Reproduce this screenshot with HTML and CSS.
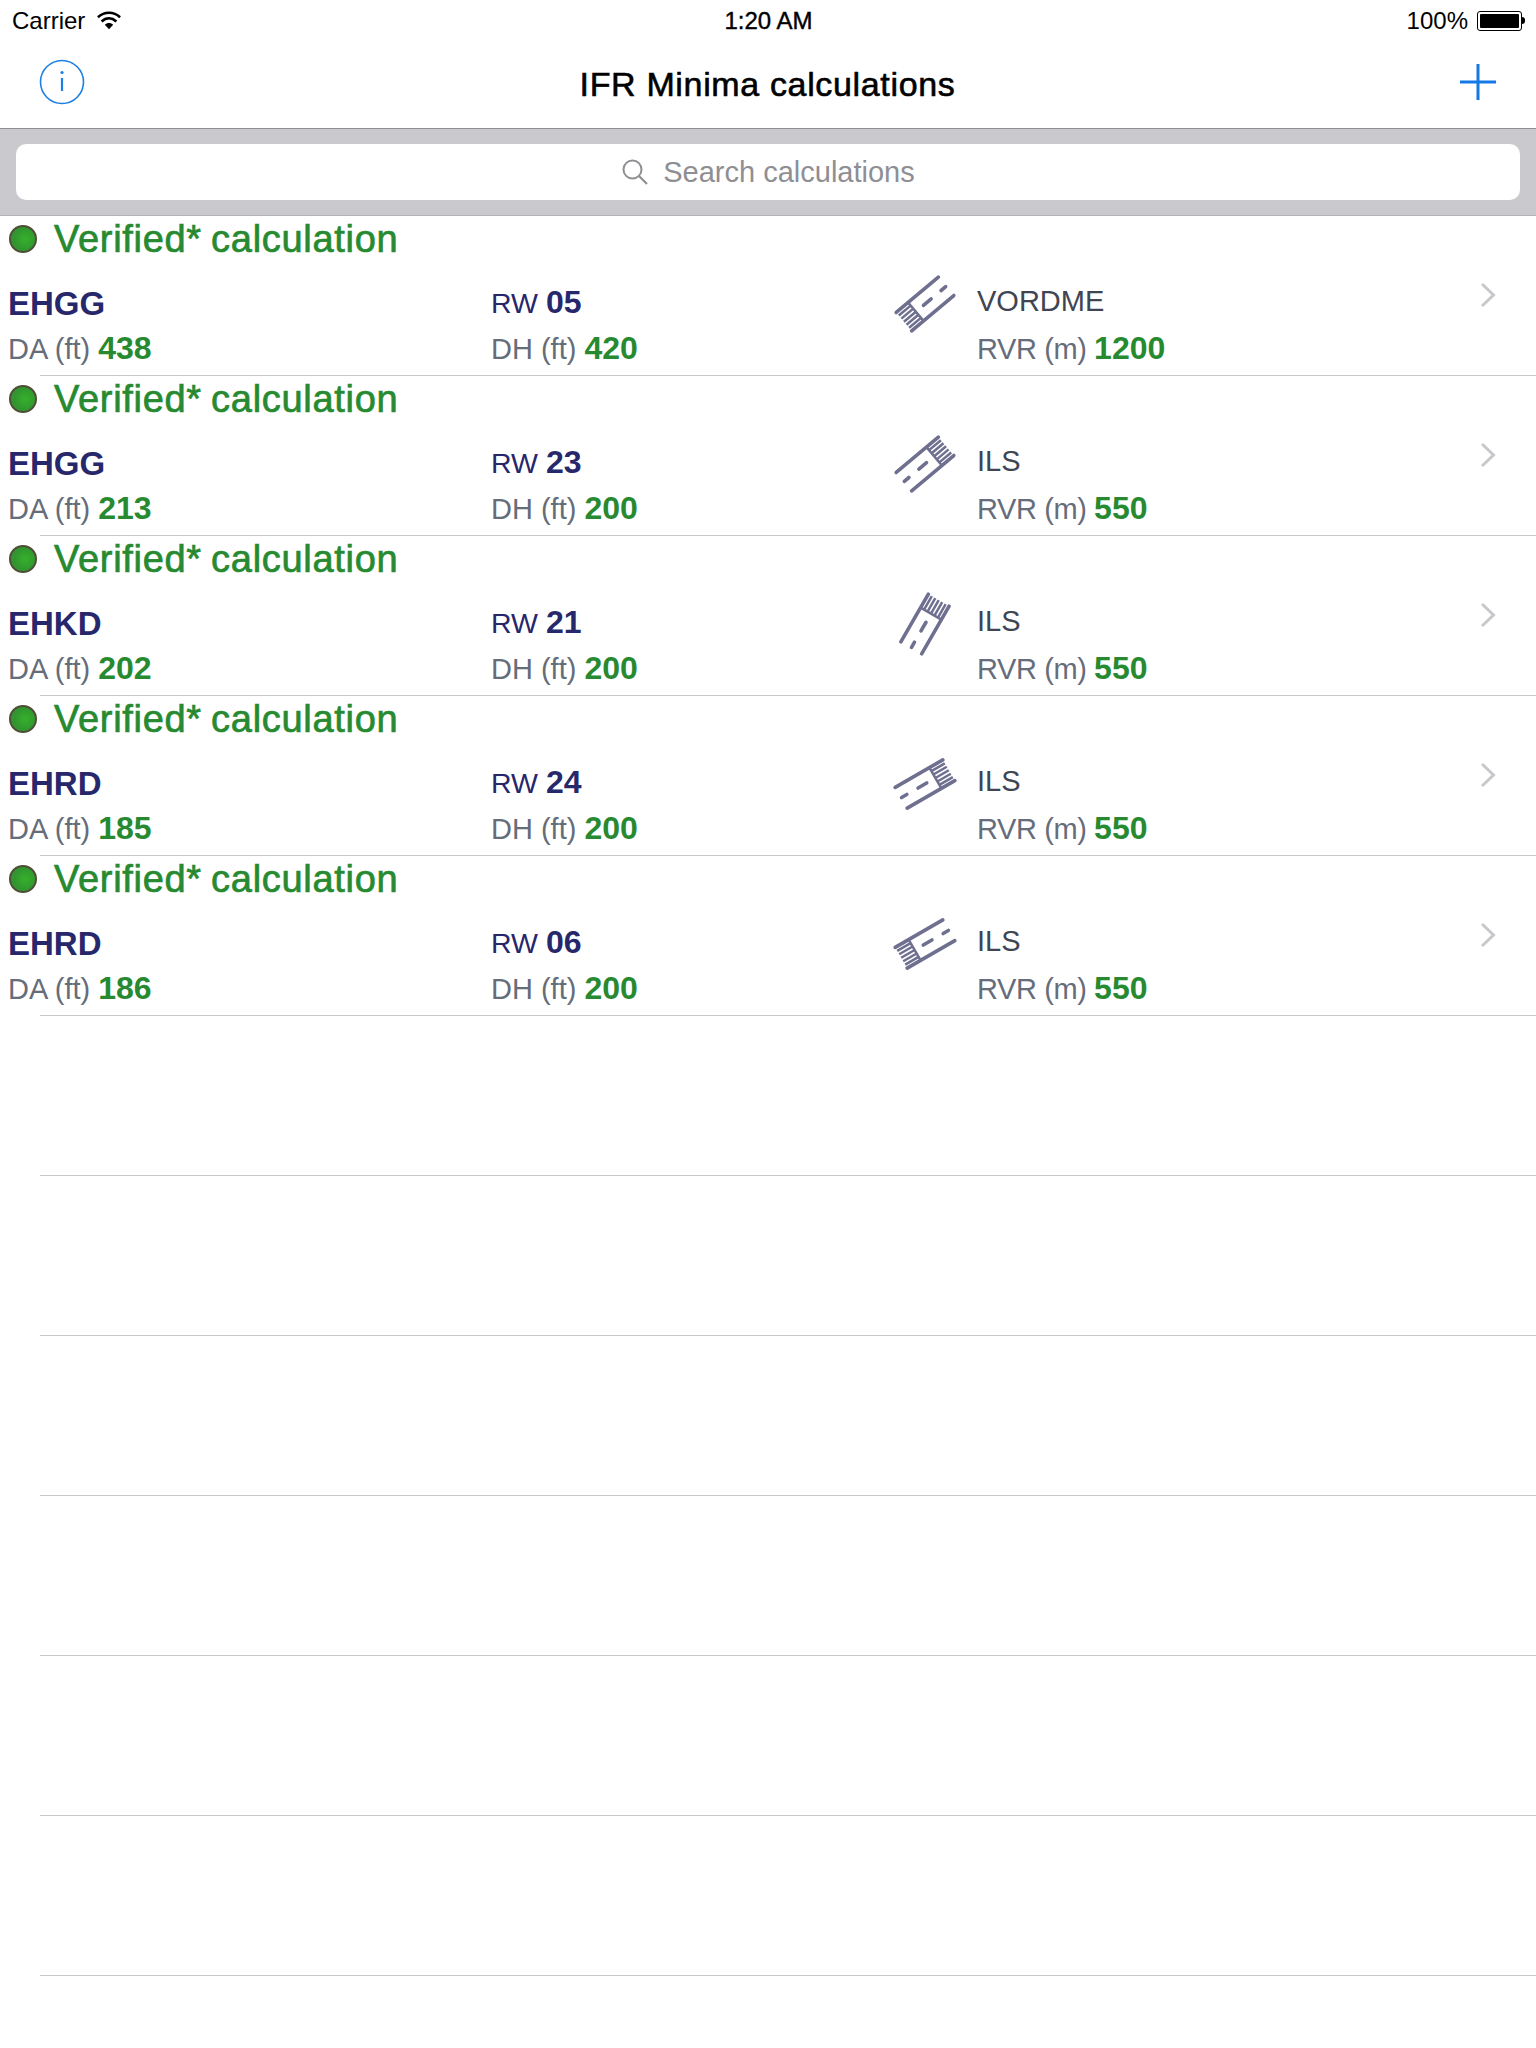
FILE: index.html
```html
<!DOCTYPE html>
<html lang="en">
  <head>
    <meta charset="UTF-8" />
    <title>IFR Minima calculations</title>
    <link rel="stylesheet" href="styles.css">
  </head>
  <body>
    <!-- Shared runway drawing, pointing right with the threshold on the left -->
    <svg class="defs" width="0" height="0">
      <symbol id="runway" viewBox="0 0 64 64">
        <g fill="none" stroke="currentColor" stroke-width="3.6" stroke-linecap="round">
          <path d="M4.5 20H59.5M4.5 44H59.5" />
          <path d="M4.5 24H20M4.5 28H20M4.5 32H20M4.5 36H20M4.5 40H20M20 20V44" stroke-width="2.5" stroke-linecap="butt" />
          <path d="M30 32H40M53 32H59" />
        </g>
      </symbol>
    </svg>

    <!-- Status bar -->
    <div class="status-bar">
      <div class="status-left">
        <span>Carrier</span>
        <svg class="wifi" width="24" height="19" viewBox="0 0 26 20">
          <path d="M1 6.5C8 0 18 0 25 6.5" fill="none" stroke="#000" stroke-width="2.8" />
          <path d="M5 11C10 6.5 16 6.5 21 11" fill="none" stroke="#000" stroke-width="2.8" />
          <path d="M8.5 14.5C11 12 15 12 17.5 14.5L13 19.5Z" fill="#000" />
        </svg>
      </div>
      <div class="status-time">1:20 AM</div>
      <div class="status-right">
        <span>100%</span>
        <div class="battery"><div class="battery-fill"></div></div>
        <div class="battery-nub"></div>
      </div>
    </div>

    <!-- Navigation bar -->
    <header class="nav-bar">
      <svg class="nav-info" width="46" height="46" viewBox="0 0 46 46">
        <circle cx="23" cy="23" r="21.5" fill="none" stroke="#1c7fe6" stroke-width="1.6" />
        <circle cx="23" cy="13.5" r="1.6" fill="#1c7fe6" />
        <path d="M23 19V32" stroke="#1c7fe6" stroke-width="2.2" />
      </svg>
      <h1>IFR Minima calculations</h1>
      <svg class="nav-add" width="36" height="36" viewBox="0 0 36 36">
        <path d="M18 0V36M0 18H36" stroke="#1479e8" stroke-width="3" />
      </svg>
    </header>

    <!-- Search -->
    <div class="search-bar">
      <div class="search-field">
        <svg width="28" height="28" viewBox="0 0 28 28">
          <circle cx="11.5" cy="11.5" r="9" fill="none" stroke="#8e8e93" stroke-width="2" />
          <path d="M18 18L26 26" stroke="#8e8e93" stroke-width="2.2" />
        </svg>
        <span>Search calculations</span>
      </div>
    </div>

    <!-- Calculations -->
    <main class="list">
      <section class="row">
        <div class="row-status"><span class="dot"></span>Verified* calculation</div>
        <div class="row-grid">
          <div class="airport">EHGG</div>
          <div class="runway">RW <b>05</b></div>
          <svg class="rw-icon rw-05"><use href="#runway" /></svg>
          <div class="approach">VORDME</div>
          <svg class="chevron" width="16" height="26" viewBox="0 0 16 26"><path d="M2 2L13.5 13L2 24" /></svg>
          <div class="minima col-a">DA (ft) <b>438</b></div>
          <div class="minima col-b">DH (ft) <b>420</b></div>
          <div class="minima col-c">RVR (m) <b>1200</b></div>
        </div>
      </section>
      <section class="row">
        <div class="row-status"><span class="dot"></span>Verified* calculation</div>
        <div class="row-grid">
          <div class="airport">EHGG</div>
          <div class="runway">RW <b>23</b></div>
          <svg class="rw-icon rw-23"><use href="#runway" /></svg>
          <div class="approach">ILS</div>
          <svg class="chevron" width="16" height="26" viewBox="0 0 16 26"><path d="M2 2L13.5 13L2 24" /></svg>
          <div class="minima col-a">DA (ft) <b>213</b></div>
          <div class="minima col-b">DH (ft) <b>200</b></div>
          <div class="minima col-c">RVR (m) <b>550</b></div>
        </div>
      </section>
      <section class="row">
        <div class="row-status"><span class="dot"></span>Verified* calculation</div>
        <div class="row-grid">
          <div class="airport">EHKD</div>
          <div class="runway">RW <b>21</b></div>
          <svg class="rw-icon rw-21"><use href="#runway" /></svg>
          <div class="approach">ILS</div>
          <svg class="chevron" width="16" height="26" viewBox="0 0 16 26"><path d="M2 2L13.5 13L2 24" /></svg>
          <div class="minima col-a">DA (ft) <b>202</b></div>
          <div class="minima col-b">DH (ft) <b>200</b></div>
          <div class="minima col-c">RVR (m) <b>550</b></div>
        </div>
      </section>
      <section class="row">
        <div class="row-status"><span class="dot"></span>Verified* calculation</div>
        <div class="row-grid">
          <div class="airport">EHRD</div>
          <div class="runway">RW <b>24</b></div>
          <svg class="rw-icon rw-24"><use href="#runway" /></svg>
          <div class="approach">ILS</div>
          <svg class="chevron" width="16" height="26" viewBox="0 0 16 26"><path d="M2 2L13.5 13L2 24" /></svg>
          <div class="minima col-a">DA (ft) <b>185</b></div>
          <div class="minima col-b">DH (ft) <b>200</b></div>
          <div class="minima col-c">RVR (m) <b>550</b></div>
        </div>
      </section>
      <section class="row">
        <div class="row-status"><span class="dot"></span>Verified* calculation</div>
        <div class="row-grid">
          <div class="airport">EHRD</div>
          <div class="runway">RW <b>06</b></div>
          <svg class="rw-icon rw-06"><use href="#runway" /></svg>
          <div class="approach">ILS</div>
          <svg class="chevron" width="16" height="26" viewBox="0 0 16 26"><path d="M2 2L13.5 13L2 24" /></svg>
          <div class="minima col-a">DA (ft) <b>186</b></div>
          <div class="minima col-b">DH (ft) <b>200</b></div>
          <div class="minima col-c">RVR (m) <b>550</b></div>
        </div>
      </section>

      <!-- Empty table rows -->
      <div class="row"></div>
      <div class="row"></div>
      <div class="row"></div>
      <div class="row"></div>
      <div class="row"></div>
      <div class="row"></div>
    </main>
  </body>
</html>
```

FILE: styles.css
```css
* {
  box-sizing: border-box;
}
html,
body {
  height: 2048px;
  overflow: hidden;
}
body {
  margin: 0;
  background: #fff;
  color: #000;
  font-family: "Liberation Sans", Arial, sans-serif;
}
.defs {
  position: absolute;
}

/* Status bar */
.status-bar {
  display: grid;
  grid-template-columns: 1fr auto 1fr;
  align-items: center;
  height: 40px;
  padding: 1px 11px 0 12px;
  font-size: 24px;
}
.status-left,
.status-right {
  display: flex;
  align-items: center;
}
.wifi {
  margin-left: 12px;
}
.status-time {
  -webkit-text-stroke: 0.4px #000;
}
.status-right {
  justify-content: flex-end;
}
.battery {
  width: 45px;
  height: 20px;
  margin-left: 9px;
  padding: 2px;
  border: 1px solid #000;
  border-radius: 3px;
}
.battery-fill {
  height: 100%;
  background: #000;
  border-radius: 1px;
}
.battery-nub {
  width: 3px;
  height: 7px;
  background: #000;
  border-radius: 0 3px 3px 0;
}

/* Navigation bar */
.nav-bar {
  display: grid;
  grid-template-columns: 1fr auto 1fr;
  align-items: center;
  height: 89px;
  padding: 0 40px 4px 39px;
  border-bottom: 1px solid #8f8f93;
}
.nav-bar h1 {
  margin: 4px 0 0;
  font-size: 34px;
  font-weight: 400;
  letter-spacing: 0.65px;
  -webkit-text-stroke: 0.6px #000;
}
.nav-add {
  justify-self: end;
}

/* Search */
.search-bar {
  height: 87px;
  padding: 15px 16px;
  background: #c9c9ce;
  border-bottom: 1px solid #b4b4b8;
}
.search-field {
  display: flex;
  align-items: center;
  justify-content: center;
  gap: 14px;
  height: 56px;
  background: #fff;
  border-radius: 10px;
  color: #8e8e93;
  font-size: 29px;
}

/* List rows */
.row {
  position: relative;
  height: 160px;
  padding-left: 8px;
}
.row::after {
  content: "";
  position: absolute;
  left: 40px;
  right: 0;
  bottom: 0;
  height: 1px;
  background: #c8c7cc;
}
.row-status {
  display: flex;
  align-items: center;
  height: 46px;
  color: #278a30;
  font-size: 38px;
  letter-spacing: 0.7px;
  word-spacing: -2px;
  -webkit-text-stroke: 0.7px #278a30;
}
.dot {
  width: 28px;
  height: 28px;
  margin: 0 17px 0 1px;
  border: 2px solid #4f4f35;
  border-radius: 50%;
  background: radial-gradient(circle at 60% 50%, #36b12a, #2f962f 60%, #4a8a45);
}
.row-grid {
  display: grid;
  grid-template-columns: 483px 408px 78px 1fr 56px;
  grid-template-rows: 46px 45px;
  margin-top: 19px;
  align-items: center;
}
.airport {
  grid-area: 1 / 1;
  color: #27276b;
  font-size: 33px;
  font-weight: 700;
}
.runway {
  grid-area: 1 / 2;
  margin-bottom: 4px;
  color: #27276b;
  font-size: 28.5px;
}
.runway b {
  font-size: 32px;
}
.approach {
  grid-area: 1 / 4;
  margin-bottom: 5px;
  color: #3f4553;
  font-size: 29px;
}
.minima {
  grid-row: 2;
  margin-bottom: 2px;
  color: #666c7a;
  font-size: 29px;
}
.minima b {
  color: #278a30;
  font-size: 32px;
  letter-spacing: 0;
}
.col-a {
  grid-column: 1;
}
.col-b {
  grid-column: 2;
}
.col-c {
  grid-column: 4;
  letter-spacing: -0.4px;
}
.rw-icon {
  grid-area: 1 / 3 / span 2;
  align-self: start;
  width: 64px;
  height: 64px;
  margin: -9px 0 0 -6px;
  color: #6f6f90;
}
.rw-05 {
  transform: rotate(-40deg);
}
.rw-23 {
  transform: rotate(140deg);
}
.rw-21 {
  transform: rotate(120deg);
}
.rw-24 {
  transform: rotate(150deg);
}
.rw-06 {
  transform: rotate(-30deg);
}
.chevron {
  grid-area: 1 / 5;
  justify-self: start;
  align-self: start;
  margin-top: 1px;
}
.chevron path {
  fill: none;
  stroke: #c7c7cc;
  stroke-width: 3;
}
```
